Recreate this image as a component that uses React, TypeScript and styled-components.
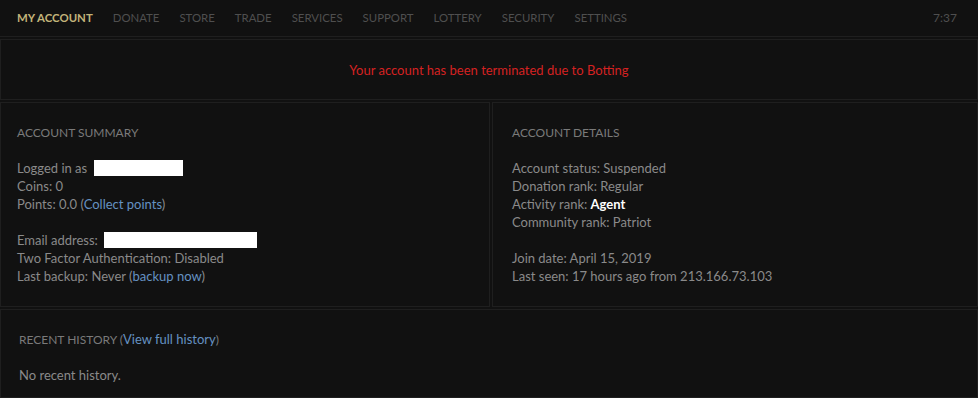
import styled, { createGlobalStyle } from "styled-components";

const Global = createGlobalStyle`
  html, body {
    margin: 0;
    padding: 0;
    background: #111111;
  }
  body {
    font-family: "Lato", "Liberation Sans", sans-serif;
    color: #8a8a8a;
  }
`;

const Page = styled.div`
  display: flex;
  flex-direction: column;
  gap: 2px;
  min-height: 398px;
  background: #111111;
`;

const Nav = styled.nav`
  display: flex;
  align-items: center;
  height: 35px;
  padding: 0 21px 1px 17px;
  border-bottom: 1px solid #1f1f1f;
`;

const NavItem = styled.a<{ $active?: boolean }>`
  font-size: 11.4px;
  text-transform: uppercase;
  color: ${(p) => (p.$active ? "#c2b47a" : "#4f4f4f")};
  font-weight: ${(p) => (p.$active ? 700 : 400)};
  margin-right: 20px;
  text-decoration: none;
`;

const Clock = styled.span`
  margin-left: auto;
  font-size: 12px;
  color: #4f4f4f;
`;

const Panel = styled.section<{ $pad?: string }>`
  border: 1px solid #1f1f1f;
  padding: ${(p) => p.$pad ?? "0 16px"};
  font-size: 13px;
  line-height: 18px;
`;

const Notice = styled(Panel)`
  height: 59px;
  display: flex;
  align-items: center;
  justify-content: center;
  color: #d52222;
`;

const Columns = styled.div`
  display: grid;
  grid-template-columns: 490px 1fr;
  gap: 2px;
`;

const Column = styled(Panel)`
  box-sizing: border-box;
  height: 205px;
`;

const Heading = styled.h2`
  margin: 21px 0 17px;
  font-size: 12px;
  font-weight: 400;
  text-transform: uppercase;
  color: #7a7a7a;
  line-height: 18px;
`;

const Group = styled.div`
  margin-bottom: 18px;
`;

const Line = styled.div``;

const Link = styled.a`
  color: #6592c2;
  text-decoration: none;
  text-transform: none;
  font-size: 13px;
`;

const Strong = styled.span`
  color: #ffffff;
  font-weight: 700;
`;

const Redacted = styled.span<{ $w: number }>`
  display: inline-block;
  vertical-align: middle;
  width: ${(p) => p.$w}px;
  height: 16px;
  background: #ffffff;
  margin: -3px 0 0 3px;
`;

const History = styled(Panel)`
  flex: 1;
`;

const HistoryHeading = styled(Heading)`
  margin: 20px 0 17px;
`;

export default function App() {
  const tabs = [
    "My Account",
    "Donate",
    "Store",
    "Trade",
    "Services",
    "Support",
    "Lottery",
    "Security",
    "Settings",
  ];
  return (
    <>
      <Global />
      <Page>
        <Nav>
          {tabs.map((t, i) => (
            <NavItem key={t} $active={i === 0}>
              {t}
            </NavItem>
          ))}
          <Clock>7:37</Clock>
        </Nav>
        <Notice>Your account has been terminated due to Botting</Notice>
        <Columns>
          <Column $pad="0 16px">
            <Heading>Account Summary</Heading>
            <Group>
              <Line>
                Logged in as <Redacted $w={89} />
              </Line>
              <Line>Coins: 0</Line>
              <Line>
                Points: 0.0 (<Link>Collect points</Link>)
              </Line>
            </Group>
            <Group>
              <Line>
                Email address: <Redacted $w={153} />
              </Line>
              <Line>Two Factor Authentication: Disabled</Line>
              <Line>
                Last backup: Never (<Link>backup now</Link>)
              </Line>
            </Group>
          </Column>
          <Column $pad="0 19px">
            <Heading>Account Details</Heading>
            <Group>
              <Line>Account status: Suspended</Line>
              <Line>Donation rank: Regular</Line>
              <Line>
                Activity rank: <Strong>Agent</Strong>
              </Line>
              <Line>Community rank: Patriot</Line>
            </Group>
            <Group>
              <Line>Join date: April 15, 2019</Line>
              <Line>Last seen: 17 hours ago from 213.166.73.103</Line>
            </Group>
          </Column>
        </Columns>
        <History $pad="0 18px">
          <HistoryHeading>
            Recent History (<Link>View full history</Link>)
          </HistoryHeading>
          <Line>No recent history.</Line>
        </History>
      </Page>
    </>
  );
}
